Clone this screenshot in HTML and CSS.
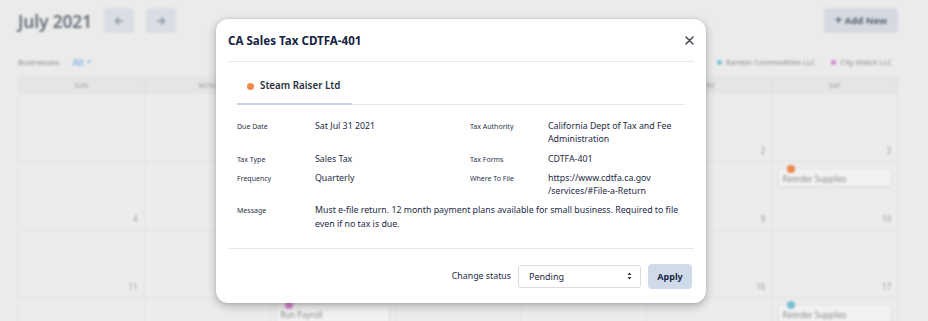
FILE: index.html
```html
<!DOCTYPE html>
<html lang="en">
<head>
    <meta charset="UTF-8">
    <meta name="viewport" content="width=device-width, initial-scale=1.0">
    <title>Tax calendar</title>
    <link rel="stylesheet" href="styles.css">
</head>
<body>
    <div class="app">
        <header class="topbar">
            <h1 class="month">July 2021</h1>
            <button class="navBtn" aria-label="Previous month">
                <svg width="10" height="10" viewBox="0 0 10 10"><path d="M8.5 5H1.5M4.5 2L1.5 5l3 3" fill="none" stroke="#8b93a3" stroke-width="1.4" stroke-linecap="round" stroke-linejoin="round"/></svg>
            </button>
            <button class="navBtn" aria-label="Next month">
                <svg width="10" height="10" viewBox="0 0 10 10"><path d="M1.5 5h7M5.5 2l3 3-3 3" fill="none" stroke="#8b93a3" stroke-width="1.4" stroke-linecap="round" stroke-linejoin="round"/></svg>
            </button>
            <button class="addBtn"><span class="plus">+</span> Add New</button>
        </header>

        <div class="filters">
            <span class="filterLabel">Businesses:</span>
            <span class="filterValue">All <span class="caret"></span></span>
            <div class="legend">
                <span class="legendItem"><i class="dot dotBlue"></i>Ramkin Commodities LLC</span>
                <span class="legendItem"><i class="dot dotPink"></i>City Watch LLC</span>
            </div>
        </div>

        <div class="calendar">
            <div class="dow">Sun</div>
            <div class="dow">Mon</div>
            <div class="dow">Tue</div>
            <div class="dow">Wed</div>
            <div class="dow">Thu</div>
            <div class="dow">Fri</div>
            <div class="dow">Sat</div>

            <div class="day"></div>
            <div class="day"></div>
            <div class="day"></div>
            <div class="day"></div>
            <div class="day"><span class="num">1</span></div>
            <div class="day"><span class="num">2</span></div>
            <div class="day"><span class="num">3</span></div>

            <div class="day"><span class="num">4</span></div>
            <div class="day"><span class="num">5</span></div>
            <div class="day"><span class="num">6</span></div>
            <div class="day"><span class="num">7</span></div>
            <div class="day"><span class="num">8</span></div>
            <div class="day"><span class="num">9</span></div>
            <div class="day">
                <div class="event"><i class="dot dotOrange"></i>Reorder Supplies</div>
                <span class="num">10</span>
            </div>

            <div class="day"><span class="num">11</span></div>
            <div class="day"><span class="num">12</span></div>
            <div class="day"><span class="num">13</span></div>
            <div class="day"><span class="num">14</span></div>
            <div class="day"><span class="num">15</span></div>
            <div class="day"><span class="num">16</span></div>
            <div class="day"><span class="num">17</span></div>

            <div class="day"><span class="num">18</span></div>
            <div class="day"><span class="num">19</span></div>
            <div class="day">
                <div class="event"><i class="dot dotPink"></i>Run Payroll</div>
                <span class="num">20</span>
            </div>
            <div class="day"><span class="num">21</span></div>
            <div class="day"><span class="num">22</span></div>
            <div class="day"><span class="num">23</span></div>
            <div class="day">
                <div class="event"><i class="dot dotBlue"></i>Reorder Supplies</div>
                <span class="num">24</span>
            </div>
        </div>
    </div>

    <div class="backdrop">
        <div class="modal">
            <div class="modalHeader">
                <h2 class="modalTitle">CA Sales Tax CDTFA-401</h2>
                <button class="closeBtn" aria-label="Close">
                    <svg width="9" height="9" viewBox="0 0 9 9"><path d="M1 1l7 7M8 1L1 8" stroke="#4a4f5a" stroke-width="1.6" stroke-linecap="round"/></svg>
                </button>
            </div>

            <div class="modalBody">
                <div class="tabs">
                    <div class="tab active"><i class="dot dotOrange"></i>Steam Raiser Ltd</div>
                </div>

                <div class="details">
                    <div class="label">Due Date</div>
                    <div class="value">Sat Jul 31 2021</div>
                    <div class="label">Tax Authority</div>
                    <div class="value">California Dept of Tax and Fee Administration</div>

                    <div class="label">Tax Type</div>
                    <div class="value">Sales Tax</div>
                    <div class="label">Tax Forms</div>
                    <div class="value">CDTFA-401</div>

                    <div class="label">Frequency</div>
                    <div class="value">Quarterly</div>
                    <div class="label">Where To File</div>
                    <div class="value">https://www.cdtfa.ca.gov<wbr>/services/#File-a-Return</div>

                    <div class="label">Message</div>
                    <div class="value wide">Must e-file return. 12 month payment plans available for small business. Required to file even if no tax is due.</div>
                </div>
            </div>

            <div class="modalFooter">
                <span class="statusLabel">Change status</span>
                <div class="select">
                    <span>Pending</span>
                    <svg width="5" height="8" viewBox="0 0 5 8"><path d="M2.5 0.5L4.5 3H0.5z M2.5 7.5L0.5 5h4z" fill="#333"/></svg>
                </div>
                <button class="applyBtn">Apply</button>
            </div>
        </div>
    </div>
</body>
</html>
```

FILE: styles.css
```css
body {
    margin: 0;
    width: 928px;
    height: 321px;
    overflow: hidden;
    background: #efefef;
    font-family: 'Noto Sans', 'Open Sans', sans-serif;
    position: relative;
}
button {
    font-family: inherit;
    border: none;
    cursor: pointer;
    padding: 0;
}
.app {
    padding: 8px 30px 0 18px;
    filter: blur(0.9px);
}
.topbar {
    display: flex;
    align-items: center;
    height: 25px;
}
.month {
    margin: 0 12px 0 0;
    font-size: 17.5px;
    font-weight: 600;
    color: #6d7480;
    letter-spacing: -0.2px;
}
.navBtn {
    width: 30px;
    height: 25px;
    margin-right: 12px;
    background: #dde1e8;
    border-radius: 4px;
    display: flex;
    align-items: center;
    justify-content: center;
}
.addBtn {
    margin-left: auto;
    width: 74px;
    height: 25px;
    background: #d9dee6;
    border-radius: 4px;
    color: #5f6673;
    font-size: 9.5px;
    font-weight: 700;
}
.plus {
    font-size: 13px;
    line-height: 10px;
}
.filters {
    display: flex;
    align-items: center;
    height: 16px;
    margin-top: 21px;
    font-size: 7.8px;
    color: #8c8f95;
}
.filterValue {
    margin-left: 12px;
    font-size: 9.5px;
    color: #62a4e8;
    display: flex;
    align-items: center;
}
.caret {
    margin-left: 3px;
    border-left: 2.5px solid transparent;
    border-right: 2.5px solid transparent;
    border-top: 2.5px solid #62a4e8;
}
.legend {
    margin-left: auto;
    display: flex;
    gap: 16px;
    font-size: 7.5px;
    color: #8c8f95;
    margin-right: 6px;
}
.legendItem {
    display: flex;
    align-items: center;
}
.legendItem .dot {
    width: 5px;
    height: 5px;
    margin-right: 4px;
}
.dot {
    display: inline-block;
    border-radius: 50%;
    flex-shrink: 0;
}
.dotBlue { background: #7cc3d9; }
.dotPink { background: #d88ad6; }
.dotOrange { background: #ee8a4a; }

.calendar {
    margin-top: 6px;
    display: grid;
    grid-template-columns: repeat(7, 1fr);
    grid-template-rows: 18px repeat(4, 68px);
    border-left: 1px solid #e7e7e7;
}
.dow {
    background: #e9e9e9;
    border-right: 1px solid #e3e3e3;
    font-size: 7px;
    color: #a3a3a3;
    text-transform: uppercase;
    display: flex;
    align-items: center;
    justify-content: center;
}
.day {
    background: #f0f0f0;
    border-right: 1px solid #e6e6e6;
    border-bottom: 1px solid #e6e6e6;
    display: flex;
    flex-direction: column;
    padding: 6px 5px 5px 6px;
}
.num {
    margin-top: auto;
    align-self: flex-end;
    padding-right: 1px;
    font-size: 8px;
    color: #a0a0a0;
}
.event {
    position: relative;
    background: #f5f5f5;
    border: 1px solid #e6e6e6;
    border-radius: 3px;
    box-shadow: 0 1px 3px rgba(0, 0, 0, 0.05);
    padding: 4px 3px 2px 3px;
    font-size: 8px;
    color: #929292;
}
.event .dot {
    position: absolute;
    top: -4px;
    left: 8px;
    width: 8px;
    height: 8px;
}

.backdrop {
    position: absolute;
    inset: 0;
    background: rgba(0, 0, 0, 0.015);
}
.modal {
    position: absolute;
    left: 216px;
    top: 19px;
    width: 490px;
    background: #fff;
    border-radius: 12px;
    box-shadow: 0 3px 10px rgba(0, 0, 0, 0.28), 0 0 2px rgba(0, 0, 0, 0.12);
    color: #1d2a45;
}
.modalHeader {
    height: 42px;
    margin: 0 12px 0 12px;
    border-bottom: 1px solid #e8e8e8;
    display: flex;
    align-items: center;
    justify-content: space-between;
}
.modalTitle {
    margin: 0;
    font-size: 11.6px;
    font-weight: 700;
    color: #172443;
}
.closeBtn {
    background: none;
    width: 12px;
    height: 12px;
    margin-right: -1px;
    display: flex;
    align-items: center;
    justify-content: center;
}
.modalBody {
    padding: 0 21px;
}
.tabs {
    display: flex;
    border-bottom: 1px solid #e6e6e6;
}
.tab {
    display: flex;
    align-items: center;
    width: 115px;
    box-sizing: border-box;
    padding: 17px 8px 10px 10px;
    line-height: 14px;
    white-space: nowrap;
    font-size: 9.8px;
    font-weight: 600;
    color: #2a3040;
    border-bottom: 2px solid #c7d4e8;
    margin-bottom: -1px;
}
.tab .dot {
    width: 7px;
    height: 7px;
    margin-right: 6px;
}
.details {
    margin: 15px 0 17px 0;
    display: grid;
    grid-template-columns: 78px 155px 78px 1fr;
    row-gap: 6px;
    line-height: 13.3px;
}
.label {
    font-size: 7px;
    color: #2b3448;
}
.value {
    font-size: 8.8px;
    color: #1d2a45;
}
.value.wide {
    grid-column: 2 / 5;
}
.modalFooter {
    margin: 0 12px;
    border-top: 1px solid #e8e8e8;
    height: 54px;
    display: flex;
    align-items: center;
    justify-content: flex-end;
    gap: 7px;
    padding-right: 2px;
}
.statusLabel {
    font-size: 8.8px;
    color: #1d2a45;
}
.select {
    width: 123px;
    height: 23px;
    box-sizing: border-box;
    border: 1px solid #dcdcdc;
    border-radius: 3px;
    display: flex;
    align-items: center;
    justify-content: space-between;
    padding: 0 8px 0 10px;
    font-size: 9px;
    color: #1d2a45;
}
.applyBtn {
    width: 44px;
    height: 25px;
    border-radius: 4px;
    background: #d0dbea;
    color: #1a2744;
    font-size: 9px;
    font-weight: 700;
}
```
